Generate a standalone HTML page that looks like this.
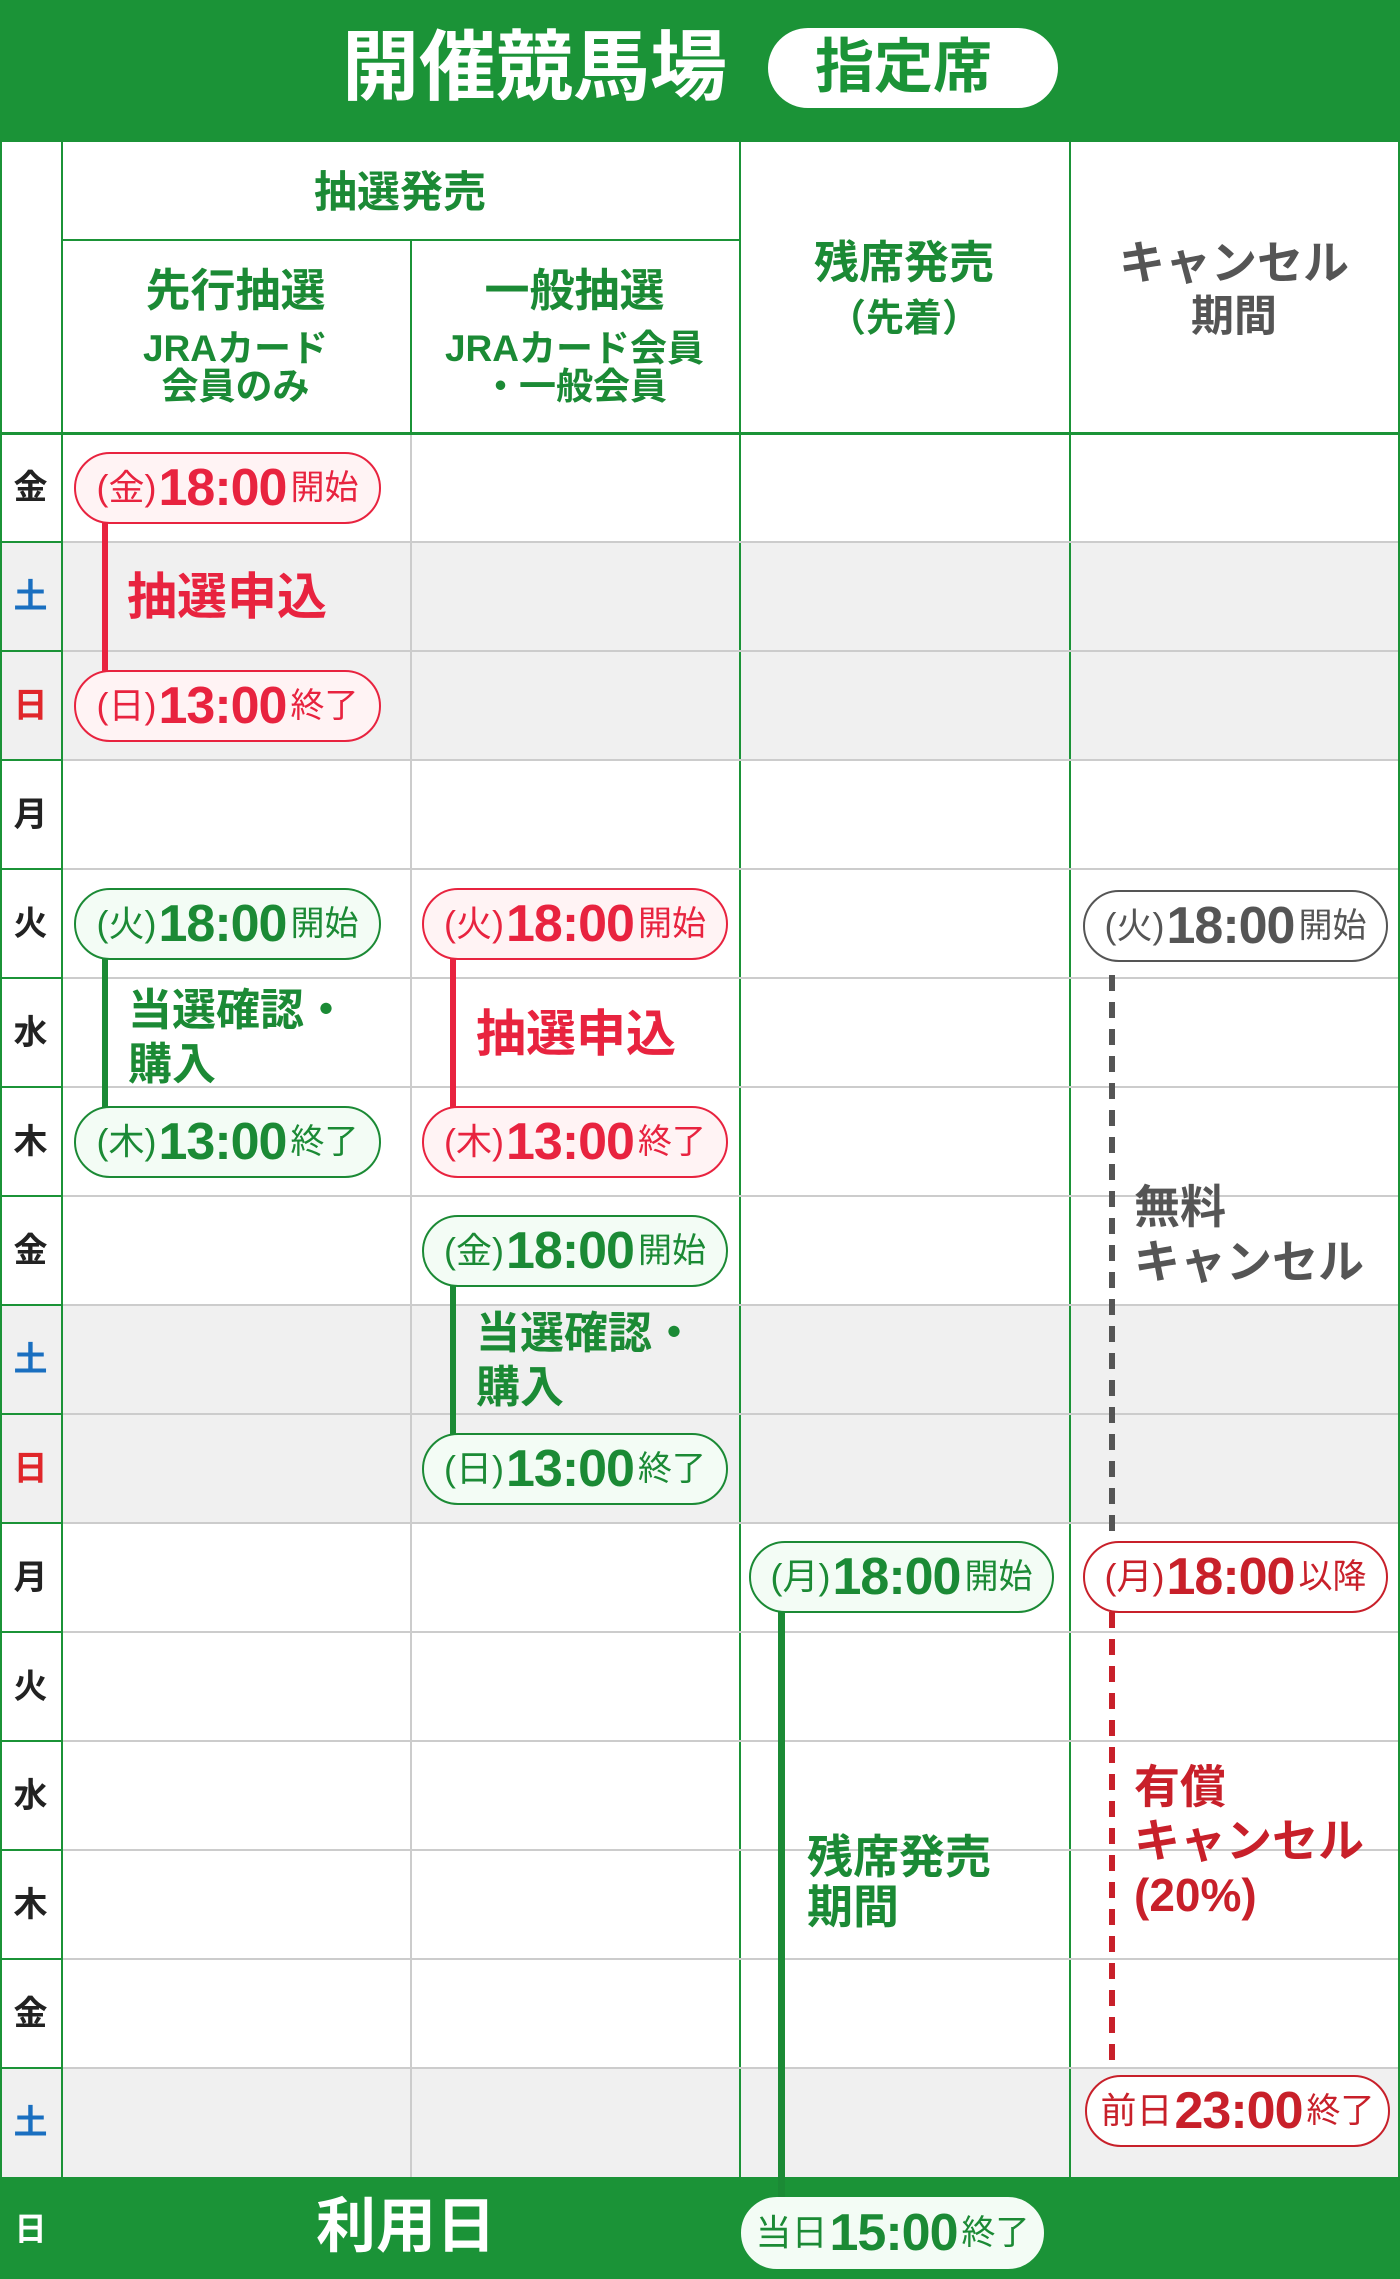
<!DOCTYPE html>
<html><head><meta charset="utf-8"><style>
*{margin:0;padding:0;box-sizing:border-box}
body{width:1400px;height:2279px;position:relative;overflow:hidden;background:#fff;font-family:"Liberation Sans","Noto Sans CJK JP",sans-serif}
.a{position:absolute}
.t{position:absolute;font-weight:bold;white-space:nowrap;line-height:1}
.p{position:absolute;height:72px;border:2.5px solid;border-radius:36px;display:flex;align-items:center;justify-content:center;white-space:nowrap;line-height:1}
.p .x{font-size:36px}
.p .n{font-size:52px;font-weight:bold;letter-spacing:-1px;margin:0 4px 0 2px}
.p .s{font-size:34px}
.r{color:#e8233f;border-color:#e8233f;background:#fff3f4}
.g{color:#1b8a35;border-color:#1b8a35;background:#f3fcf5}
.k{color:#555;border-color:#555;background:#fff}
.d{color:#c8202a;border-color:#c8202a;background:#fff}
.day{position:absolute;left:0;width:61px;text-align:center;font-size:34px;font-weight:bold;line-height:1}
</style></head><body>
<div class="a" style="left:0;top:0;width:1400px;height:142px;background:#1b9337"></div>
<div class="t" style="left:342px;top:30px;font-size:77px;color:#fff">開催競馬場</div>
<div class="a" style="left:768px;top:28px;width:290px;height:80px;background:#fff;border-radius:40px"></div>
<div class="t" style="left:815px;top:38px;font-size:59px;color:#1b9337">指定席</div>

<div class="a" style="left:0;top:542px;width:1400px;height:218px;background:#f0f0f0"></div>
<div class="a" style="left:0;top:1305px;width:1400px;height:218px;background:#f0f0f0"></div>
<div class="a" style="left:0;top:2069px;width:1400px;height:109px;background:#f0f0f0"></div>

<div class="a" style="left:61px;top:239px;width:678px;height:2px;background:#1b9337"></div>
<div class="a" style="left:0;top:432px;width:1400px;height:3px;background:#1b9337"></div>
<div class="a" style="left:0;top:142px;width:2px;height:2036px;background:#1b9337"></div>
<div class="a" style="left:1398px;top:142px;width:2px;height:2036px;background:#1b9337"></div>
<div class="a" style="left:61px;top:142px;width:2px;height:2036px;background:#1b9337"></div>
<div class="a" style="left:410px;top:241px;width:2px;height:192px;background:#1b9337"></div>
<div class="a" style="left:410px;top:435px;width:2px;height:1743px;background:#ccc"></div>
<div class="a" style="left:739px;top:142px;width:2px;height:2036px;background:#1b9337"></div>
<div class="a" style="left:1069px;top:142px;width:2px;height:2036px;background:#1b9337"></div>

<div class="a" style="left:63px;top:541px;width:1335px;height:2px;background:#ccc"></div>
<div class="a" style="left:63px;top:650px;width:1335px;height:2px;background:#ccc"></div>
<div class="a" style="left:63px;top:759px;width:1335px;height:2px;background:#ccc"></div>
<div class="a" style="left:63px;top:868px;width:1335px;height:2px;background:#ccc"></div>
<div class="a" style="left:63px;top:977px;width:1335px;height:2px;background:#ccc"></div>
<div class="a" style="left:63px;top:1086px;width:1335px;height:2px;background:#ccc"></div>
<div class="a" style="left:63px;top:1195px;width:1335px;height:2px;background:#ccc"></div>
<div class="a" style="left:63px;top:1304px;width:1335px;height:2px;background:#ccc"></div>
<div class="a" style="left:63px;top:1413px;width:1335px;height:2px;background:#ccc"></div>
<div class="a" style="left:63px;top:1522px;width:1335px;height:2px;background:#ccc"></div>
<div class="a" style="left:63px;top:1631px;width:1335px;height:2px;background:#ccc"></div>
<div class="a" style="left:63px;top:1740px;width:1335px;height:2px;background:#ccc"></div>
<div class="a" style="left:63px;top:1849px;width:1335px;height:2px;background:#ccc"></div>
<div class="a" style="left:63px;top:1958px;width:1335px;height:2px;background:#ccc"></div>
<div class="a" style="left:63px;top:2067px;width:1335px;height:2px;background:#ccc"></div>
<div class="a" style="left:0;top:541px;width:61px;height:2px;background:#1b9337"></div>
<div class="a" style="left:0;top:650px;width:61px;height:2px;background:#1b9337"></div>
<div class="a" style="left:0;top:759px;width:61px;height:2px;background:#1b9337"></div>
<div class="a" style="left:0;top:868px;width:61px;height:2px;background:#1b9337"></div>
<div class="a" style="left:0;top:977px;width:61px;height:2px;background:#1b9337"></div>
<div class="a" style="left:0;top:1086px;width:61px;height:2px;background:#1b9337"></div>
<div class="a" style="left:0;top:1195px;width:61px;height:2px;background:#1b9337"></div>
<div class="a" style="left:0;top:1304px;width:61px;height:2px;background:#1b9337"></div>
<div class="a" style="left:0;top:1413px;width:61px;height:2px;background:#1b9337"></div>
<div class="a" style="left:0;top:1522px;width:61px;height:2px;background:#1b9337"></div>
<div class="a" style="left:0;top:1631px;width:61px;height:2px;background:#1b9337"></div>
<div class="a" style="left:0;top:1740px;width:61px;height:2px;background:#1b9337"></div>
<div class="a" style="left:0;top:1849px;width:61px;height:2px;background:#1b9337"></div>
<div class="a" style="left:0;top:1958px;width:61px;height:2px;background:#1b9337"></div>
<div class="a" style="left:0;top:2067px;width:61px;height:2px;background:#1b9337"></div>

<div class="t" style="left:61px;width:678px;text-align:center;top:172px;font-size:43px;color:#1b8a35">抽選発売</div>
<div class="t" style="left:61px;width:349px;text-align:center;top:268px;font-size:45px;color:#1b8a35">先行抽選</div>
<div class="t" style="left:61px;width:349px;text-align:center;top:330px;font-size:37px;color:#1b8a35;line-height:38px">JRAカード<br>会員のみ</div>
<div class="t" style="left:410px;width:329px;text-align:center;top:268px;font-size:45px;color:#1b8a35">一般抽選</div>
<div class="t" style="left:410px;width:329px;text-align:center;top:330px;font-size:37px;color:#1b8a35;line-height:38px">JRAカード会員<br>・一般会員</div>
<div class="t" style="left:739px;width:330px;text-align:center;top:240px;font-size:45px;color:#1b8a35">残席発売</div>
<div class="t" style="left:739px;width:330px;text-align:center;top:300px;font-size:38px;color:#1b8a35">（先着）</div>
<div class="t" style="left:1069px;width:330px;text-align:center;top:240px;font-size:46px;color:#555">キャンセル</div>
<div class="t" style="left:1069px;width:330px;text-align:center;top:296px;font-size:43px;color:#555">期間</div>

<div class="day" style="top:471px;color:#222">金</div>
<div class="day" style="top:580px;color:#1a6fc0">土</div>
<div class="day" style="top:689px;color:#e0262a">日</div>
<div class="day" style="top:798px;color:#222">月</div>
<div class="day" style="top:907px;color:#222">火</div>
<div class="day" style="top:1016px;color:#222">水</div>
<div class="day" style="top:1125px;color:#222">木</div>
<div class="day" style="top:1234px;color:#222">金</div>
<div class="day" style="top:1343px;color:#1a6fc0">土</div>
<div class="day" style="top:1452px;color:#e0262a">日</div>
<div class="day" style="top:1561px;color:#222">月</div>
<div class="day" style="top:1670px;color:#222">火</div>
<div class="day" style="top:1779px;color:#222">水</div>
<div class="day" style="top:1888px;color:#222">木</div>
<div class="day" style="top:1997px;color:#222">金</div>
<div class="day" style="top:2106px;color:#1a6fc0">土</div>

<div class="a" style="left:0;top:2177px;width:1400px;height:102px;background:#1b9337"></div>
<div class="day" style="top:2213px;color:#fff;font-size:32px">日</div>
<div class="t" style="left:316px;top:2197px;font-size:60px;color:#fff">利用日</div>

<div class="a" style="left:102px;top:520px;width:6px;height:154px;background:#e8233f"></div>
<div class="a" style="left:102px;top:956px;width:6px;height:154px;background:#1b8a35"></div>
<div class="a" style="left:450px;top:956px;width:6px;height:154px;background:#e8233f"></div>
<div class="a" style="left:450px;top:1283px;width:6px;height:154px;background:#1b8a35"></div>
<div class="a" style="left:778px;top:1610px;width:7px;height:590px;background:#1b8a35"></div>
<div class="a" style="left:1109px;top:975px;width:6px;height:564px;background:repeating-linear-gradient(to bottom,#555 0 16px,transparent 16px 27px)"></div>
<div class="a" style="left:1109px;top:1612px;width:6px;height:456px;background:repeating-linear-gradient(to bottom,#c8202a 0 16px,transparent 16px 27px)"></div>

<div class="t" style="left:127px;top:572px;font-size:50px;color:#e8233f">抽選申込</div>
<div class="t" style="left:128px;top:984px;font-size:44px;color:#1b8a35;line-height:54px">当選確認・<br>購入</div>
<div class="t" style="left:476px;top:1009px;font-size:50px;color:#e8233f">抽選申込</div>
<div class="t" style="left:476px;top:1307px;font-size:44px;color:#1b8a35;line-height:54px">当選確認・<br>購入</div>
<div class="t" style="left:1134px;top:1180px;font-size:46px;color:#555;line-height:55px">無料<br>キャンセル</div>
<div class="t" style="left:807px;top:1832px;font-size:46px;color:#1b8a35;line-height:50px">残席発売<br>期間</div>
<div class="t" style="left:1134px;top:1760px;font-size:46px;color:#c8202a;line-height:54px">有償<br>キャンセル<br>(20%)</div>

<div class="p r" style="left:74px;top:452px;width:307px"><span class="x">(金)</span><span class="n">18:00</span><span class="s">開始</span></div>
<div class="p r" style="left:74px;top:670px;width:307px"><span class="x">(日)</span><span class="n">13:00</span><span class="s">終了</span></div>
<div class="p g" style="left:74px;top:888px;width:307px"><span class="x">(火)</span><span class="n">18:00</span><span class="s">開始</span></div>
<div class="p g" style="left:74px;top:1106px;width:307px"><span class="x">(木)</span><span class="n">13:00</span><span class="s">終了</span></div>
<div class="p r" style="left:422px;top:888px;width:306px"><span class="x">(火)</span><span class="n">18:00</span><span class="s">開始</span></div>
<div class="p r" style="left:422px;top:1106px;width:306px"><span class="x">(木)</span><span class="n">13:00</span><span class="s">終了</span></div>
<div class="p g" style="left:422px;top:1215px;width:306px"><span class="x">(金)</span><span class="n">18:00</span><span class="s">開始</span></div>
<div class="p g" style="left:422px;top:1433px;width:306px"><span class="x">(日)</span><span class="n">13:00</span><span class="s">終了</span></div>
<div class="p k" style="left:1083px;top:890px;width:305px"><span class="x">(火)</span><span class="n">18:00</span><span class="s">開始</span></div>
<div class="p g" style="left:749px;top:1541px;width:305px"><span class="x">(月)</span><span class="n">18:00</span><span class="s">開始</span></div>
<div class="p d" style="left:1083px;top:1541px;width:305px"><span class="x">(月)</span><span class="n">18:00</span><span class="s">以降</span></div>
<div class="p d" style="left:1085px;top:2075px;width:305px"><span class="x">前日</span><span class="n">23:00</span><span class="s">終了</span></div>
<div class="p g" style="left:741px;top:2197px;width:303px;border-color:#f3fcf5"><span class="x">当日</span><span class="n">15:00</span><span class="s">終了</span></div>
</body></html>
